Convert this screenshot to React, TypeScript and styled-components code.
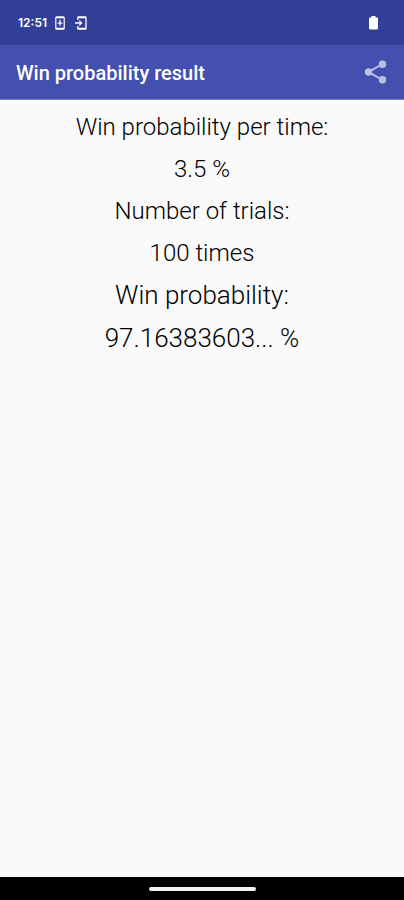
import React from "react";
import styled, { createGlobalStyle } from "styled-components";

const GlobalStyle = createGlobalStyle`
  * { box-sizing: border-box; }
  body {
    margin: 0;
    background: #fafafa;
    font-family: Roboto, "Liberation Sans", sans-serif;
  }
`;

const Screen = styled.div`
  display: flex;
  flex-direction: column;
  min-height: 100vh;
  background: #fafafa;
`;

const StatusBar = styled.div`
  display: flex;
  align-items: center;
  justify-content: space-between;
  height: 45px;
  padding: 0 26px 0 18px;
  background: #323f99;
  color: #fff;
`;

const StatusGroup = styled.div`
  display: flex;
  align-items: center;
  gap: 8px;
`;

const StatusIcons = styled.div`
  display: flex;
  align-items: center;
  gap: 10px;
`;

const Clock = styled.time`
  font-family: Inter, Roboto, sans-serif;
  font-size: 12px;
  line-height: 16px;
  font-weight: 600;
`;

const AppBar = styled.header`
  display: flex;
  align-items: center;
  justify-content: space-between;
  height: 55px;
  padding: 0 16px;
  background: #4350b0;
  border-bottom: 1px solid #7983bf;
  color: #fff;
`;

const Title = styled.h1`
  margin: 0;
  padding-top: 2px;
  font-size: 20px;
  line-height: 24px;
  font-weight: 500;
`;

const ShareButton = styled.button`
  display: flex;
  padding: 0;
  border: 0;
  background: none;
  color: #bac0e2;
  cursor: pointer;
`;

const Results = styled.dl`
  flex: 1;
  margin: 0;
  padding-top: 6px;
  font-weight: 300;
  text-align: center;
  color: #000;
`;

const Entry = styled.div<{ $large?: boolean }>`
  font-size: ${(p) => (p.$large ? 26 : 24)}px;
  line-height: ${(p) => (p.$large ? 43 : 42)}px;
`;

const Label = styled.dt`
  margin: 0;
`;

const Value = styled.dd`
  margin: 0;
`;

const NavBar = styled.div`
  display: flex;
  align-items: center;
  justify-content: center;
  height: 23px;
  background: #000;
`;

const HomeHandle = styled.div`
  width: 107px;
  height: 4px;
  border-radius: 2px;
  background: #f2f2f2;
`;

const entries = [
  { label: "Win probability per time:", value: "3.5 %" },
  { label: "Number of trials:", value: "100 times" },
  { label: "Win probability:", value: "97.16383603... %", large: true },
];

const DeviceIcon = () => (
  <svg width="10" height="14" viewBox="0 0 10 14" fill="none" stroke="#fff" aria-hidden="true">
    <rect x="0.8" y="0.8" width="8.4" height="12.4" rx="1" strokeWidth="1.2" />
    <path d="M1 1.6h8M1 12.4h8" strokeWidth="1.4" />
    <path d="M5 3.8v6M2.6 7.2h4.8" strokeWidth="1.3" />
  </svg>
);

const TransferIcon = () => (
  <svg width="12" height="14" viewBox="0 0 12 14" fill="none" stroke="#fff" aria-hidden="true">
    <path d="M2.8 4V1.6a.8.8 0 0 1 .8-.8h6.6a.8.8 0 0 1 .8.8v10.8a.8.8 0 0 1-.8.8H3.6a.8.8 0 0 1-.8-.8V10" strokeWidth="1.3" />
    <path d="M3 1.6h8M3 12.4h8" strokeWidth="1.4" />
    <path d="M0 7h6M4.2 4.6 6.6 7 4.2 9.4" strokeWidth="1.3" />
  </svg>
);

const BatteryIcon = () => (
  <svg width="9" height="14" viewBox="0 0 9 14" fill="#fff" aria-label="Battery full">
    <path d="M2.5 0h4v1.4H8a1 1 0 0 1 1 1V12a1.5 1.5 0 0 1-1.5 1.5h-6A1.5 1.5 0 0 1 0 12V2.4a1 1 0 0 1 1-1h1.5z" />
  </svg>
);

const ShareIcon = () => (
  <svg width="24" height="26" viewBox="0 0 24 26" fill="currentColor" aria-hidden="true">
    <path d="M18.5 5.2 4.5 13l14 7.8" fill="none" stroke="currentColor" strokeWidth="2" />
    <circle cx="18.5" cy="5.2" r="3.7" />
    <circle cx="4.5" cy="13" r="3.7" />
    <circle cx="18.5" cy="20.8" r="3.7" />
  </svg>
);

export default function App() {
  return (
    <>
      <GlobalStyle />
      <Screen>
        <StatusBar>
          <StatusGroup>
            <Clock>12:51</Clock>
            <StatusIcons>
              <DeviceIcon />
              <TransferIcon />
            </StatusIcons>
          </StatusGroup>
          <BatteryIcon />
        </StatusBar>
        <AppBar>
          <Title>Win probability result</Title>
          <ShareButton type="button" aria-label="Share">
            <ShareIcon />
          </ShareButton>
        </AppBar>
        <Results>
          {entries.map((entry) => (
            <Entry key={entry.label} $large={entry.large}>
              <Label>{entry.label}</Label>
              <Value>{entry.value}</Value>
            </Entry>
          ))}
        </Results>
        <NavBar>
          <HomeHandle />
        </NavBar>
      </Screen>
    </>
  );
}
